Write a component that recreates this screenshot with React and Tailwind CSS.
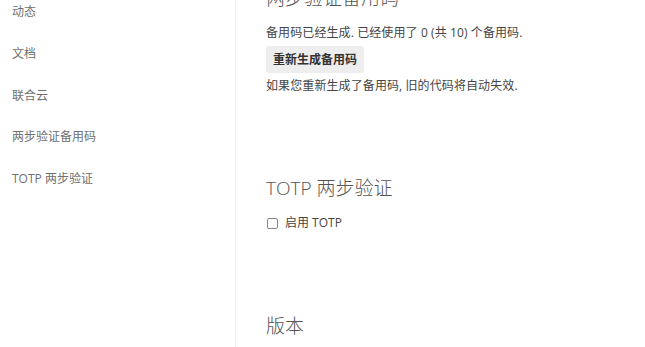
export default function App() {
  const nav = ["动态", "文档", "联合云", "两步验证备用码", "TOTP 两步验证"];
  return (
    <div
      className="w-[645px] h-[347px] overflow-hidden bg-white flex"
      style={{ fontFamily: '"Open Sans", "Noto Sans CJK SC", sans-serif' }}
    >
      <div className="w-[236px] shrink-0 border-r border-[#eeeeee] flex flex-col pt-[2px]">
        {nav.map((n) => (
          <div key={n} className="h-[41.75px] shrink-0 pl-[12px] text-[12px] leading-[20px] text-[#707070]">
            {n}
          </div>
        ))}
      </div>
      <div className="flex-1 pl-[30px] flex flex-col items-start">
        <h2 className="mt-[-15px] text-[19px] leading-[26px] text-[#555555] font-light">两步验证备用码</h2>
        <p className="mt-[12px] text-[12px] leading-[20px] text-[#444444] tracking-[0.1px]">
          备用码已经生成. 已经使用了 0 (共 10) 个备用码.
        </p>
        <button className="mt-[3px] h-[27px] px-[7px] rounded-[3px] bg-[#eeeeee] text-[12px] font-bold text-[#333333]">
          重新生成备用码
        </button>
        <p className="mt-[3px] text-[12px] leading-[20px] text-[#444444] tracking-[0.1px]">
          如果您重新生成了备用码, 旧的代码将自动失效.
        </p>
        <h2 className="mt-[79px] text-[19px] leading-[26px] text-[#555555] font-light">TOTP 两步验证</h2>
        <label className="mt-[12px] flex items-center h-[20px] text-[12px] text-[#444444]">
          <span className="w-[11px] h-[11px] ml-[1px] mr-[7px] border border-[#888888] rounded-[2px] bg-white"></span>
          启用 TOTP
        </label>
        <h2 className="mt-[80px] text-[19px] leading-[26px] text-[#555555] font-light">版本</h2>
      </div>
    </div>
  );
}
